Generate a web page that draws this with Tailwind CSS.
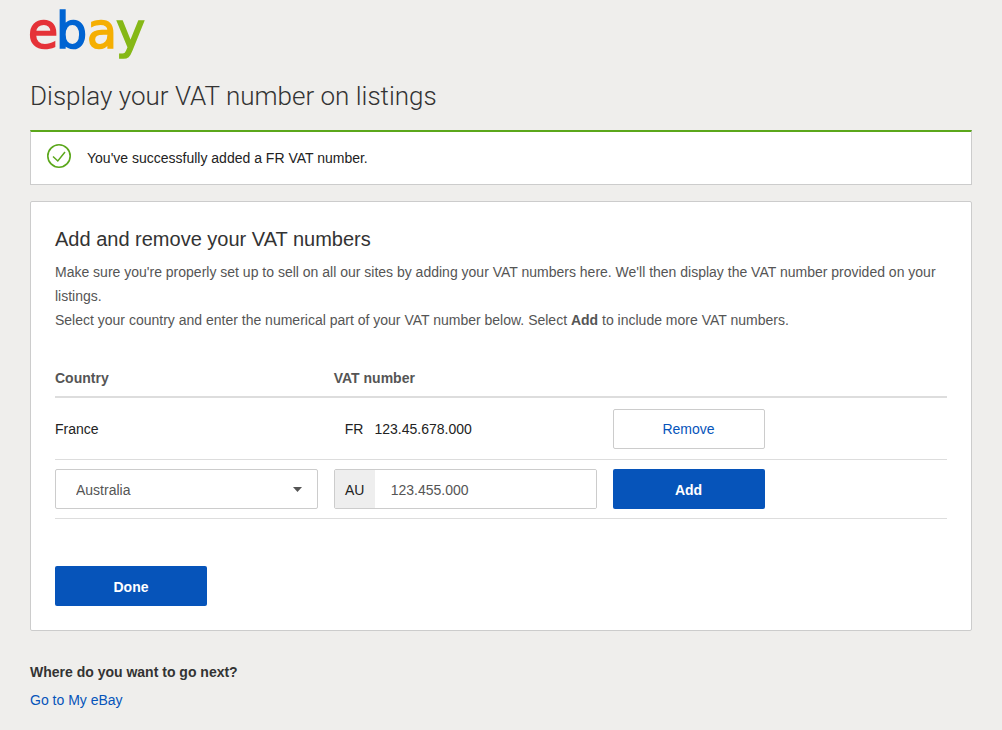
<!DOCTYPE html>
<html lang="en">
<head>
<meta charset="utf-8">
<meta name="viewport" content="width=device-width, initial-scale=1">
<title>Display your VAT number on listings</title>
<script src="https://cdn.jsdelivr.net/npm/@tailwindcss/browser@4"></script>
</head>
<body class="min-h-screen bg-[#efeeec] px-[30px] pb-4 font-['Liberation_Sans',Arial,sans-serif] text-sm leading-6 text-[#222]">
<header>
  <a href="#" aria-label="eBay home" class="block w-[120px]">
    <svg class="block h-16 w-[120px] overflow-visible" viewBox="0 0 120 64" font-family="DejaVu Sans, Verdana, sans-serif" font-size="49" stroke-width="1.6">
      <text y="48"><tspan x="-2" fill="#e53238" stroke="#e53238">e</tspan><tspan x="26" fill="#0064d2" stroke="#0064d2">b</tspan><tspan x="57" fill="#f5af02" stroke="#f5af02">a</tspan><tspan x="86" fill="#86b817" stroke="#86b817">y</tspan></text>
    </svg>
  </a>
</header>
<main>
  <h1 class="mt-3 font-[Roboto,sans-serif] text-[26px] leading-10 font-light text-[#333]">Display your VAT number on listings</h1>
  <div role="status" class="mt-[14px] flex h-[55px] items-center gap-4 border border-t-2 border-[#ccc] border-t-[#5ba71b] bg-white px-4">
    <svg class="mb-1 size-6" viewBox="0 0 24 24" fill="none" stroke="#5ba71b" aria-hidden="true"><circle cx="12" cy="12" r="11.2" stroke-width="1.6"/><path d="M6 12.5 10.8 17 18 8" stroke-width="1.5"/></svg>
    <p>You've successfully added a FR VAT number.</p>
  </div>
  <form class="mt-4 rounded-xs border border-[#ccc] bg-white p-6">
    <h2 class="text-xl leading-[26px] text-[#333]">Add and remove your VAT numbers</h2>
    <p class="mt-2 text-[#555]">Make sure you're properly set up to sell on all our sites by adding your VAT numbers here. We'll then display the VAT number provided on your listings.<br>Select your country and enter the numerical part of your VAT number below. Select <strong>Add</strong> to include more VAT numbers.</p>
    <table class="mt-[34px] w-full table-fixed border-collapse text-left">
      <colgroup><col class="w-[31.25%]"><col class="w-[31.25%]"><col></colgroup>
      <thead>
        <tr class="h-[31px] border-b-2 border-[#ddd] align-top text-[#555]"><th scope="col" id="country">Country</th><th scope="col" id="vat">VAT number</th><td></td></tr>
      </thead>
      <tbody>
        <tr class="h-[62px] border-b border-[#ddd]">
          <td class="pt-0.5">France</td>
          <td class="pt-0.5 pl-[11px]">FR<span class="ml-[11px]">123.45.678.000</span></td>
          <td class="pt-0.5"><button type="button" class="h-10 w-[152px] rounded-xs border border-[#ccc] bg-white text-[#0654ba]">Remove</button></td>
        </tr>
        <tr class="h-[59px] border-b border-[#ddd]">
          <td class="pr-4">
            <div class="relative">
              <select aria-labelledby="country" class="block h-10 w-full appearance-none rounded-xs border border-[#ccc] bg-white pt-0.5 pr-8 pl-5 text-[#555]"><option>Australia</option></select>
              <svg class="pointer-events-none absolute top-[18px] right-4 h-[5px] w-[9px]" viewBox="0 0 9 5" fill="#555" aria-hidden="true"><path d="M0 0h9L4.5 5z"/></svg>
            </div>
          </td>
          <td class="pr-4">
            <div class="flex h-10 overflow-hidden rounded-xs border border-[#ccc]">
              <span class="flex w-10 shrink-0 items-center justify-center bg-[#eee] pt-0.5">AU</span>
              <input type="text" value="123.455.000" aria-labelledby="vat" class="min-w-0 flex-1 bg-white px-4 pt-0.5 text-[#555]">
            </div>
          </td>
          <td><button type="button" class="block h-10 w-[152px] rounded-xs bg-[#0654ba] pt-0.5 font-bold text-white">Add</button></td>
        </tr>
      </tbody>
    </table>
    <button type="submit" class="mt-[47px] block h-10 w-[152px] rounded-xs bg-[#0654ba] pt-0.5 font-bold text-white">Done</button>
  </form>
</main>
<footer class="mt-[29px]">
  <h2 class="font-bold text-[#333]">Where do you want to go next?</h2>
  <a href="#" class="mt-1 inline-block text-[#0654ba]">Go to My eBay</a>
</footer>
</body>
</html>
